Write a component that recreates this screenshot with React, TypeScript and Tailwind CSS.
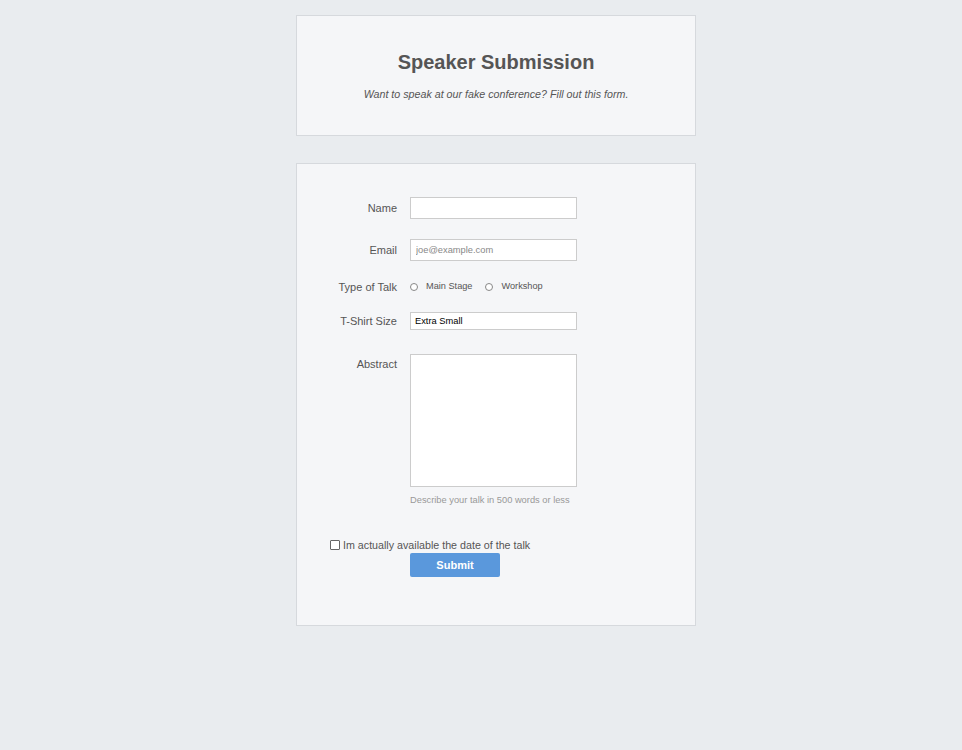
const labelCls = "w-[100px] shrink-0 text-right text-[11px] text-[#555]";

const App = () => {
  return (
    <div className="min-h-[750px] w-full bg-[#e9ecef] pt-[15px] font-['Liberation_Sans',Arial,sans-serif]">
      <div className="ml-[296px] w-[400px]">
        <div className="border border-[#d6d9dd] bg-[#f5f6f8] pt-[34px] pb-[34px] text-center text-[#555]">
          <h1 className="text-[20px] font-bold leading-[24px]">Speaker Submission</h1>
          <p className="mt-[13px] text-[10.7px] italic leading-[14px]">
            Want to speak at our fake conference? Fill out this form.
          </p>
        </div>

        <form className="mt-[27px] border border-[#d6d9dd] bg-[#f5f6f8] pt-[33px] pb-[48px]">
          <div className="flex items-center">
            <label className={labelCls}>Name</label>
            <input className="ml-[13px] h-[22px] w-[167px] border border-[#ccc] bg-white px-[5px] text-[9.3px] outline-none" />
          </div>

          <div className="mt-[20px] flex items-center">
            <label className={labelCls}>Email</label>
            <input
              placeholder="joe@example.com"
              className="ml-[13px] h-[22px] w-[167px] border border-[#ccc] bg-white px-[5px] text-[9.3px] outline-none placeholder:text-[#888]"
            />
          </div>

          <div className="mt-[19px] flex h-[14px] items-center">
            <label className={labelCls}>Type of Talk</label>
            <div className="ml-[13px] flex items-center text-[9.2px] text-[#555]">
              <span className="h-[8px] w-[8px] rounded-full border border-[#888] bg-white" />
              <span className="ml-[8px]">Main Stage</span>
              <span className="ml-[13px] h-[8px] w-[8px] rounded-full border border-[#888] bg-white" />
              <span className="ml-[8px]">Workshop</span>
            </div>
          </div>

          <div className="mt-[18px] flex items-center">
            <label className={labelCls}>T-Shirt Size</label>
            <select className="ml-[13px] h-[18px] w-[167px] appearance-none rounded-none border border-[#ccc] bg-white px-[4px] text-[9.3px] leading-[16px] text-black outline-none">
              <option>Extra Small</option>
              <option>Small</option>
              <option>Medium</option>
              <option>Large</option>
            </select>
          </div>

          <div className="mt-[24px] flex items-start">
            <label className={labelCls + " pt-[2px]"}>Abstract</label>
            <div className="ml-[13px]">
              <textarea className="block h-[133px] w-[167px] resize-none border border-[#ccc] bg-white outline-none" />
              <p className="mt-[7px] text-[9.3px] leading-[12px] text-[#999]">
                Describe your talk in 500 words or less
              </p>
            </div>
          </div>

          <div className="mt-[32px] ml-[33px] flex h-[14px] items-center text-[10.7px] text-[#555]">
            <span className="h-[10px] w-[10px] rounded-[1px] border border-[#666] bg-white" />
            <span className="ml-[3px]">Im actually available the date of the talk</span>
          </div>

          <div className="ml-[113px]">
            <button
              type="button"
              className="h-[24px] w-[90px] rounded-[2px] bg-[#5a98dc] text-[11px] font-bold text-white"
            >
              Submit
            </button>
          </div>
        </form>
      </div>
    </div>
  );
};

export default App;
